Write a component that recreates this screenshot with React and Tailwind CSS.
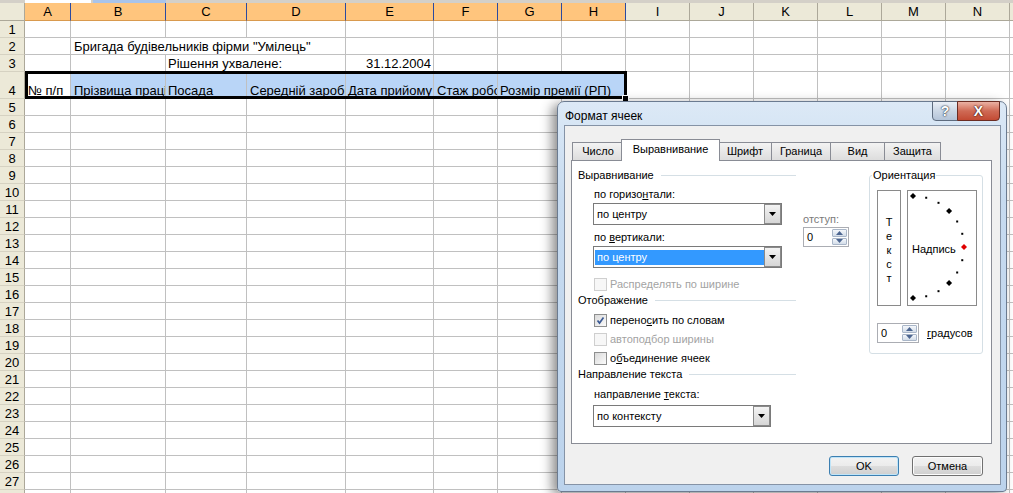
import React from 'react'

const GRID =
  'grid grid-cols-[25px_46px_95px_81px_99px_88px_64px_64px_64px_64px_64px_64px_64px_64px_64px_64px]'
const LETTERS = ['A', 'B', 'C', 'D', 'E', 'F', 'G', 'H', 'I', 'J', 'K', 'L', 'M', 'N', 'O']

function Cell({ className = '', children }) {
  return (
    <div
      className={`border-r border-b border-[#c0c0c0] flex items-end whitespace-nowrap overflow-hidden leading-[15px] ${className}`}
    >
      {children}
    </div>
  )
}

function RowHead({ n, className = 'items-center' }) {
  return (
    <div
      className={`bg-[#ece9d8] border-r border-b border-r-[#aca899] border-b-[#d6d2c2] flex justify-center leading-[15px] ${className}`}
    >
      {n}
    </div>
  )
}

function EmptyCells({ count }) {
  return Array.from({ length: count }, (_, i) => <Cell key={i} />)
}

/* ---------- dialog widgets ---------- */

function Section({ children }) {
  return (
    <div className="flex items-center h-[16px]">
      <span>{children}</span>
      <span className="flex-1 h-px bg-[#d5dfe5] ml-[7px]" />
    </div>
  )
}

function Arrow({ up }) {
  return (
    <svg width="7" height="4" viewBox="0 0 7 4">
      <path d={up ? 'M0 4L3.5 0L7 4Z' : 'M0 0H7L3.5 4Z'} fill="#4c6590" />
    </svg>
  )
}

function Spin({ w }) {
  return (
    <div className={`flex h-[20px] border border-[#abadb3] bg-white ${w}`}>
      <span className="flex-1 pl-[3px] leading-[18px]">0</span>
      <div className="flex flex-col w-[15px] my-[1px] mr-[1px] gap-px">
        <span className="flex-1 border border-[#a9b6c8] rounded-[1px] bg-gradient-to-b from-[#f4f7fb] to-[#d3dde9] flex items-center justify-center">
          <Arrow up />
        </span>
        <span className="flex-1 border border-[#a9b6c8] rounded-[1px] bg-gradient-to-b from-[#f4f7fb] to-[#d3dde9] flex items-center justify-center">
          <Arrow />
        </span>
      </div>
    </div>
  )
}

function Select({ value, w, focused }) {
  return (
    <div className={`flex h-[22px] border border-[#7a7a7a] bg-white ${w}`}>
      <div className="flex-1 flex items-center pl-px">
        <span
          className={`flex-1 h-[15px] flex items-center pl-[2px] ${focused ? 'bg-[#3399ff] text-white' : ''}`}
        >
          {value}
        </span>
      </div>
      <div className="w-[17px] border border-[#8a8a8a] bg-gradient-to-b from-[#f3f3f3] to-[#d6d6d6] flex items-center justify-center">
        <svg width="7" height="4" viewBox="0 0 7 4">
          <path d="M0 0H7L3.5 4Z" fill="#000" />
        </svg>
      </div>
    </div>
  )
}

function Check({ checked, disabled, children }) {
  return (
    <div className="flex items-center h-[16px]">
      <span
        className={`w-[13px] h-[13px] border flex items-center justify-center ${
          disabled
            ? 'border-[#cfcfcf] bg-[#f7f7f7]'
            : 'border-[#8e8f8f] bg-gradient-to-br from-[#dadada] to-[#fbfbfb]'
        }`}
      >
        {checked && (
          <svg width="9" height="9" viewBox="0 0 9 9">
            <path d="M1.5 4.5L3.5 7L7.5 1.5" stroke="#3b5a94" strokeWidth="1.7" fill="none" />
          </svg>
        )}
      </span>
      <span className={`ml-[3px] ${disabled ? 'text-[#a3a3a3]' : ''}`}>{children}</span>
    </div>
  )
}

function Dial() {
  const angles = [90, 75, 60, 45, 30, 15, 0, -15, -30, -45, -60, -75, -90]
  return (
    <svg className="absolute inset-0" width="68" height="114" viewBox="0 0 68 114">
      {angles.map(a => {
        const r = (a * Math.PI) / 180
        const x = 5 + 51 * Math.cos(r)
        const y = 56 - 51 * Math.sin(r)
        const big = a % 45 === 0
        if (big) {
          return (
            <path
              key={a}
              d={`M${x} ${y - 3}L${x + 3} ${y}L${x} ${y + 3}L${x - 3} ${y}Z`}
              fill={a === 0 ? '#e00000' : '#000'}
            />
          )
        }
        return <rect key={a} x={x - 1} y={y - 1} width="2" height="2" fill="#000" />
      })}
    </svg>
  )
}

const TABS = [
  { label: 'Число', cls: 'w-[52px]' },
  { label: 'Выравнивание', cls: 'w-[99px] -ml-[3px]', sel: true },
  { label: 'Шрифт', cls: 'w-[54px] -ml-[2px]' },
  { label: 'Граница', cls: 'w-[60px] -ml-px' },
  { label: 'Вид', cls: 'w-[55px] -ml-px' },
  { label: 'Защита', cls: 'w-[57px] -ml-px' },
]

function Dialog() {
  return (
    <div className="absolute left-[557px] top-[101px] w-[450px] h-[391px] flex flex-col px-[6px] pb-[6px] pl-[6px] pr-[5px] rounded-t-[7px] rounded-b-[4px] border border-[#6b7b90] bg-[linear-gradient(180deg,#dce9f6_0%,#c7dbf0_25%,#bcd3ec_100%)] shadow-[-5px_3px_12px_rgba(0,0,0,0.45)] text-[11px]">
      {/* title bar */}
      <div className="relative h-[23px] shrink-0">
        <span className="block pl-px pt-[6px] leading-[16px] text-[12px]">Формат ячеек</span>
        <div className="absolute -top-px right-px flex h-[20px]">
          <div className="w-[26px] flex items-center justify-center rounded-bl-[4px] border border-[#5d6b7e] bg-gradient-to-b from-[#eaf0f7] via-[#cbd7e5] to-[#b4c4d8] text-white font-bold text-[14px] [text-shadow:0_0_2px_#1e2a3a,0_0_1px_#1e2a3a]">
            ?
          </div>
          <div className="w-[43px] -ml-px flex items-center justify-center rounded-br-[4px] border border-[#6b2c22] bg-gradient-to-b from-[#eab1a3] via-[#cf6a55] to-[#c24a33] text-white font-bold text-[14px] [text-shadow:0_0_2px_#3a0c05,0_0_1px_#3a0c05]">
            X
          </div>
        </div>
      </div>

      {/* client area */}
      <div className="flex-1 flex flex-col bg-[#f0f0f0] border border-[#8593a6] pt-[13px] pl-[6px] pr-[8px]">
        {/* tabs */}
        <div className="flex items-end h-[22px] pl-px">
          {TABS.map(t => (
            <div
              key={t.label}
              className={`${t.cls} flex items-center justify-center border border-b-0 border-[#898c95] ${
                t.sel
                  ? 'relative z-10 h-[22px] bg-white pb-[2px]'
                  : 'h-[18px] mb-px bg-gradient-to-b from-[#f3f3f3] to-[#dddddd]'
              }`}
            >
              {t.label}
            </div>
          ))}
        </div>

        {/* tab panel */}
        <div className="-mt-px h-[284px] bg-white border border-[#898c95] flex pl-[6px] pt-[6px] leading-[16px]">
          {/* left column */}
          <div className="w-[218px] flex flex-col">
            <Section>Выравнивание</Section>
            <div className="ml-[15px] flex flex-col">
              <div className="mt-[3px] pl-px">
                по горизо<u>н</u>тали:
              </div>
              <div className="mt-px">
                <Select value="по центру" w="w-[189px]" />
              </div>
              <div className="mt-[4px] pl-px">
                по <u>в</u>ертикали:
              </div>
              <div className="mt-px">
                <Select value="по центру" w="w-[189px]" focused />
              </div>
              <div className="mt-[8px] pl-px">
                <Check disabled>Распределять по ширине</Check>
              </div>
            </div>
            <Section>Отображение</Section>
            <div className="ml-[16px] flex flex-col">
              <div className="mt-[4px]">
                <Check checked>
                  перено<u>с</u>ить по словам
                </Check>
              </div>
              <div className="mt-[3px]">
                <Check disabled>автоподбор ширины</Check>
              </div>
              <div className="mt-[3px]">
                <Check>
                  о<u>б</u>ъединение ячеек
                </Check>
              </div>
            </div>
            <Section>Направление текста</Section>
            <div className="ml-[15px] flex flex-col">
              <div className="mt-[4px] pl-px">
                направление <u>т</u>екста:
              </div>
              <div className="mt-[3px]">
                <Select value="по контексту" w="w-[178px] h-[21px]" />
              </div>
            </div>
          </div>

          {/* indent */}
          <div className="ml-[7px] w-[46px] flex flex-col mt-[44px]">
            <span className="text-[#7a7a7a]">отступ:</span>
            <Spin w="w-[46px]" />
          </div>

          {/* orientation */}
          <fieldset className="ml-[20px] w-[114px] h-[187px] border border-[#d5dfe5] rounded-[3px] p-0">
            <legend className="ml-[2px] px-px leading-[16px]">Ориентация</legend>
            <div className="ml-[7px] mt-[7px] flex gap-[6px]">
              <div className="w-[24px] h-[116px] border border-[#8a8a8a] flex flex-col items-center justify-center leading-[14px] pt-[3px]">
                <span>Т</span>
                <span>е</span>
                <span>к</span>
                <span>с</span>
                <span>т</span>
              </div>
              <div className="relative w-[70px] h-[116px] border border-[#8a8a8a] flex items-center pl-[4px] pt-[2px]">
                <Dial />
                <span className="relative">Надпись</span>
              </div>
            </div>
            <div className="ml-[7px] mt-[17px] flex items-center">
              <Spin w="w-[42px]" />
              <span className="ml-[8px]">
                <u>г</u>радусов
              </span>
            </div>
          </fieldset>
        </div>

        {/* buttons */}
        <div className="flex justify-end gap-[13px] mt-[12px] pr-[9px]">
          <div className="w-[70px] h-[20px] rounded-[3px] border border-[#3c7fb1] bg-[linear-gradient(180deg,#f3f3f3_0%,#ebebeb_50%,#dddddd_51%,#cfcfcf_100%)] shadow-[inset_0_0_0_1px_#bfe4f8] flex items-center justify-center">
            OK
          </div>
          <div className="w-[71px] h-[20px] rounded-[3px] border border-[#707070] bg-[linear-gradient(180deg,#f3f3f3_0%,#ebebeb_50%,#dddddd_51%,#cfcfcf_100%)] shadow-[inset_0_0_0_1px_#fcfcfc] flex items-center justify-center">
            Отмена
          </div>
        </div>
      </div>
    </div>
  )
}

export default function App() {
  const rest = Array.from({ length: 24 }, (_, i) => i + 5)

  return (
    <div className="relative w-[1013px] h-[493px] overflow-hidden bg-white text-black font-['Liberation_Sans',Arial,sans-serif] text-[13px]">
      {/* edge of the toolbar above */}
      <div className="h-[3px] flex bg-[#d4d0c8]">
        <div className="w-[25px]" />
        <div className="w-[66px] bg-white" />
        <div className="w-[2px]" />
        <div className="w-[73px] bg-[#a9c4ea]" />
      </div>

      {/* column headers */}
      <div className={`${GRID} h-[18px]`}>
        <div className="bg-[#ece9d8] border-r border-b border-[#aca899]" />
        {LETTERS.map((l, i) => (
          <div
            key={l}
            className={`border-r border-b flex items-center justify-center leading-none ${
              i < 8
                ? 'bg-[#ffc57d] border-r-[#2b4aa0] border-b-[#d99a4e]'
                : 'bg-[#ece9d8] border-r-[#aca899] border-b-[#aca899]'
            }`}
          >
            {l}
          </div>
        ))}
      </div>

      {/* row 1 */}
      <div className={`${GRID} h-[17px]`}>
        <RowHead n={1} />
        <EmptyCells count={15} />
      </div>

      {/* row 2 */}
      <div className={`${GRID} h-[17px]`}>
        <RowHead n={2} />
        <Cell />
        <Cell className="col-span-3 pl-[3px]">Бригада будівельників фірми "Умілець"</Cell>
        <EmptyCells count={11} />
      </div>

      {/* row 3 */}
      <div className={`${GRID} h-[17px]`}>
        <RowHead n={3} />
        <Cell />
        <Cell />
        <Cell className="col-span-2 pl-[2px]">Рішення ухвалене:</Cell>
        <Cell className="justify-end pr-[2px]">31.12.2004</Cell>
        <EmptyCells count={10} />
      </div>

      {/* row 4 – table heading */}
      <div className={`${GRID} h-[27px]`}>
        <RowHead n={4} className="items-end" />
        <Cell className="pl-[3px]">№ п/п</Cell>
        <Cell className="bg-[#b9d5f7] pl-[3px]">Прізвища працівників</Cell>
        <Cell className="bg-[#b9d5f7] pl-[2px]">Посада</Cell>
        <Cell className="bg-[#b9d5f7] pl-[3px]">Середній заробіток</Cell>
        <Cell className="bg-[#b9d5f7] pl-[2px]">Дата прийому</Cell>
        <Cell className="bg-[#b9d5f7] pl-[3px]">Стаж роботи</Cell>
        <Cell className="col-span-2 bg-[#b9d5f7] pl-[2px]">Розмір премії (РП)</Cell>
        <EmptyCells count={7} />
      </div>

      {rest.map(n => (
        <div key={n} className={`${GRID} h-[17px]`}>
          <RowHead n={n} />
          <EmptyCells count={15} />
        </div>
      ))}

      {/* selection frame A4:H4 */}
      <div className="absolute left-[25px] top-[71px] w-[602px] h-[28px] border-[3px] border-black pointer-events-none" />
      <div className="absolute left-[622px] top-[95px] w-[7px] h-[7px] bg-black border border-white" />

      <Dialog />
    </div>
  )
}
